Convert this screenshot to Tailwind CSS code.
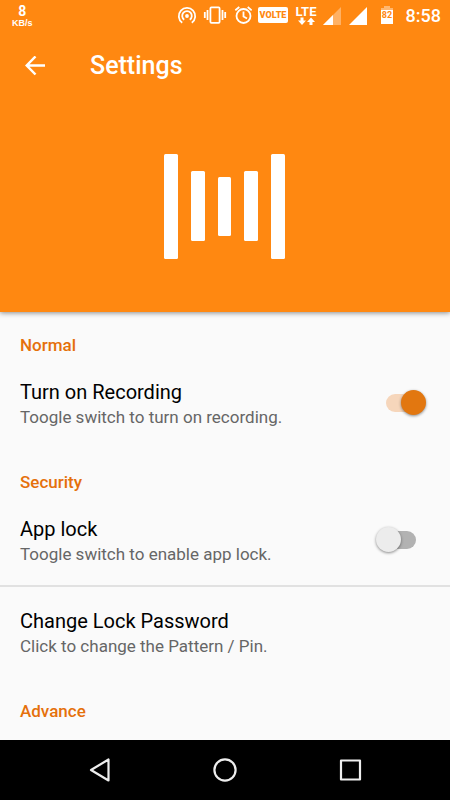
<!DOCTYPE html>
<html lang="en">
<head>
    <meta charset="UTF-8">
    <meta name="viewport" content="width=device-width, initial-scale=1.0">
    <title>Settings</title>
    <script src="https://cdn.jsdelivr.net/npm/@tailwindcss/browser@4"></script>
</head>
<body class="min-h-screen flex flex-col bg-[#fafafa] font-[Roboto,sans-serif] text-black">
    <header class="relative h-[312px] flex flex-col bg-[#ff8811] text-white shadow-[0_1px_5px_rgba(0,0,0,0.45)]">
        <!-- Status bar -->
        <div class="h-[31px] flex items-center justify-between pl-3 pr-[9px]">
            <div class="flex flex-col items-center font-bold">
                <span class="text-[14px] leading-[14px]">8</span>
                <span class="text-[9px] leading-[10px] font-[Liberation_Sans,sans-serif]">KB/s</span>
            </div>
            <div class="flex items-center gap-1.5">
                <svg class="w-5 h-[31px]" viewBox="0 0 20 31" fill="none" stroke="currentColor" stroke-width="1.8">
                    <path d="M5.2 22.8A8.2 8.2 0 1 1 14.8 22.8"/>
                    <path d="M7.2 19.8A4.8 4.8 0 1 1 12.8 19.8"/>
                    <circle cx="10" cy="16" r="1.9" fill="currentColor" stroke="none"/>
                </svg>
                <svg class="w-[25px] h-[31px]" viewBox="0 0 25 31" fill="none" stroke="currentColor" stroke-width="1.8">
                    <rect x="7.4" y="7.4" width="9.2" height="15.4" rx="1"/>
                    <path d="M4.5 10v10M1.8 12v6M19.5 10v10M22.2 12v6"/>
                </svg>
                <svg class="w-[18px] h-[31px]" viewBox="0 0 18 31" fill="none" stroke="currentColor" stroke-width="1.8">
                    <circle cx="9.500" cy="16" r="7"/>
                    <path d="M9.500 11.500v5l3.500 2M1.300 10.300l4-3.300M17.700 10.300l-4-3.300"/>
                </svg>
                <svg class="w-[31px] h-[31px]" viewBox="0 0 31 31">
                    <rect x="0" y="7" width="30" height="16" rx="2" fill="#fff"/>
                    <text x="15" y="18" text-anchor="middle" font-family="Roboto, sans-serif" font-weight="900" font-size="9" fill="#ff8811">VOLTE</text>
                </svg>
                <svg class="w-[22px] h-[31px]" viewBox="0 0 22 31" fill="currentColor">
                    <text x="11" y="16" text-anchor="middle" font-family="Roboto, sans-serif" font-weight="700" font-size="13">LTE</text>
                    <path d="M5.5 17.500h3v3h2.500l-4 4.500-4-4.500h2.500zM14.500 25v-3h-2.500l4-4.500 4 4.500h-2.500v3z"/>
                </svg>
                <svg class="w-[19px] h-[31px]" viewBox="0 0 19 31" fill="currentColor">
                    <path d="M18 7v18H0z" opacity=".35"/>
                    <path d="M10 15v10H0z"/>
                </svg>
                <svg class="w-[26px] h-[31px]" viewBox="0 0 26 31" fill="currentColor">
                    <path d="M19 7v18H1z"/>
                </svg>
                <svg class="w-5 h-[31px]" viewBox="0 0 20 31" fill="currentColor">
                    <path d="M4 6h6v2h3v3H1V8h3z" opacity=".4"/>
                    <path d="M1 10h12v14H1z"/>
                    <text x="7" y="18" text-anchor="middle" font-family="Roboto, sans-serif" font-weight="700" font-size="9" fill="#ff8811">82</text>
                </svg>
                <time class="text-lg leading-[31px] font-medium">8:58</time>
            </div>
        </div>
        <!-- App bar -->
        <div class="h-[70px] flex items-center gap-[45px] pl-[25px]">
            <button type="button" aria-label="Back" class="w-5 h-5">
                <svg class="w-5 h-5" viewBox="0 0 20 20" fill="none" stroke="currentColor" stroke-width="2.5">
                    <path d="M20 9.500H2M10.500 .5L1.700 9.500l8.800 9"/>
                </svg>
            </button>
            <h1 class="text-[25px] leading-8 font-medium">Settings</h1>
        </div>
        <div class="flex-1 flex justify-center items-center pr-px">
            <svg class="w-[121px] h-[105px]" viewBox="0 0 121 105" fill="currentColor">
                <rect x="0" y="0" width="14" height="105" rx="1.500"/>
                <rect x="27" y="17" width="14" height="70" rx="1.500"/>
                <rect x="54" y="23" width="13" height="59" rx="1.500"/>
                <rect x="80" y="17" width="14" height="70" rx="1.500"/>
                <rect x="107" y="0" width="14" height="105" rx="1.500"/>
            </svg>
        </div>
    </header>

    <main class="flex-1 pb-4">
        <section>
            <h2 class="pt-[21px] px-5 text-[17px] leading-6 font-medium text-[#e5700b]">Normal</h2>
            <div class="flex items-center justify-between pl-5 pr-[34px]">
                <label for="recording" class="pt-[21px] pb-5">
                    <span class="block text-xl leading-7">Turn on Recording</span>
                    <span class="block text-[17px] leading-[23px] text-[#666]">Toogle switch to turn on recording.</span>
                </label>
                <input type="checkbox" role="switch" id="recording" checked class="appearance-none relative shrink-0 w-[30px] h-[18px] rounded-full bg-[#b2b2b2] checked:bg-[#f6d6bb] before:absolute before:-top-1 before:-left-[10px] before:size-[25px] before:rounded-full before:bg-[#ececec] before:shadow-[0_1px_3px_rgba(0,0,0,0.45)] checked:before:left-[15px] checked:before:bg-[#e27710]">
            </div>
        </section>

        <section>
            <h2 class="pt-[21px] px-5 text-[17px] leading-6 font-medium text-[#e5700b]">Security</h2>
            <div class="flex items-center justify-between pl-5 pr-[34px]">
                <label for="applock" class="pt-[21px] pb-5">
                    <span class="block text-xl leading-7">App lock</span>
                    <span class="block text-[17px] leading-[23px] text-[#666]">Toogle switch to enable app lock.</span>
                </label>
                <input type="checkbox" role="switch" id="applock" class="appearance-none relative shrink-0 w-[30px] h-[18px] rounded-full bg-[#b2b2b2] checked:bg-[#f6d6bb] before:absolute before:-top-1 before:-left-[10px] before:size-[25px] before:rounded-full before:bg-[#ececec] before:shadow-[0_1px_3px_rgba(0,0,0,0.45)] checked:before:left-[15px] checked:before:bg-[#e27710]">
            </div>
            <hr class="-my-px border-t-2 border-[#e1e1e1]">
            <button type="button" class="block w-full px-5 pt-[21px] pb-5 text-left">
                <span class="block text-xl leading-7">Change Lock Password</span>
                <span class="block text-[17px] leading-[23px] text-[#666]">Click to change the Pattern / Pin.</span>
            </button>
        </section>

        <section>
            <h2 class="pt-[21px] px-5 text-[17px] leading-6 font-medium text-[#e5700b]">Advance</h2>
        </section>
    </main>

    <!-- Navigation bar -->
    <nav class="h-[60px] flex items-center justify-between px-[87px] bg-black text-[#eee]">
        <button type="button" aria-label="Back" class="size-6">
            <svg class="size-6" viewBox="0 0 24 24" fill="none" stroke="currentColor" stroke-width="2.200" stroke-linejoin="round">
                <path d="M21.500 1.500v21L4 12z"/>
            </svg>
        </button>
        <button type="button" aria-label="Home" class="size-6">
            <svg class="size-6" viewBox="0 0 24 24" fill="none" stroke="currentColor" stroke-width="2.200">
                <circle cx="12" cy="12" r="10.600"/>
            </svg>
        </button>
        <button type="button" aria-label="Recent apps" class="size-6">
            <svg class="size-6" viewBox="0 0 24 24" fill="none" stroke="currentColor" stroke-width="2.200" stroke-linejoin="round">
                <rect x="2" y="2.500" width="19" height="19"/>
            </svg>
        </button>
    </nav>
</body>
</html>
